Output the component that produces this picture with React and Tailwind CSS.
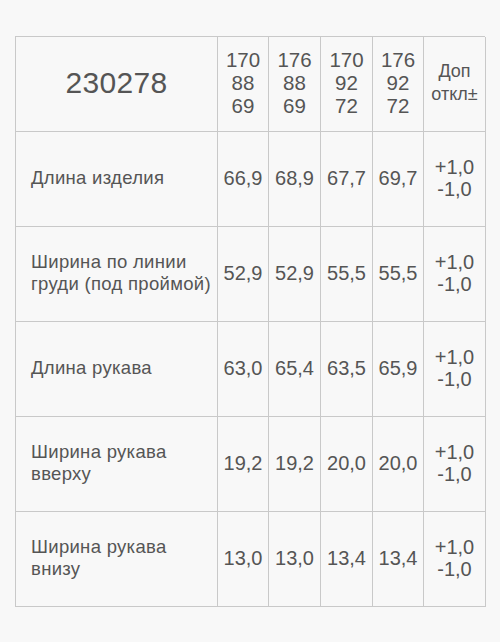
const sizes = [
  ["170", "88", "69"],
  ["176", "88", "69"],
  ["170", "92", "72"],
  ["176", "92", "72"],
];

const rows = [
  { name: ["Длина изделия"], vals: ["66,9", "68,9", "67,7", "69,7"] },
  { name: ["Ширина по линии", "груди (под проймой)"], vals: ["52,9", "52,9", "55,5", "55,5"] },
  { name: ["Длина рукава"], vals: ["63,0", "65,4", "63,5", "65,9"] },
  { name: ["Ширина рукава", "вверху"], vals: ["19,2", "19,2", "20,0", "20,0"] },
  { name: ["Ширина рукава", "внизу"], vals: ["13,0", "13,0", "13,4", "13,4"] },
];

const cell = "border-r border-b border-[#c9c9c9] flex items-center justify-center pb-[3px]";

export default function App() {
  return (
    <div
      className="w-[500px] h-[642px] bg-[#f8f8f8] pt-[36px] px-[15px] text-[#555555]"
      style={{ fontFamily: '"Liberation Sans", Arial, sans-serif' }}
    >
      <div className="grid grid-cols-[202px_51px_52px_52px_51px_62px] auto-rows-[95px] border-l border-t border-[#c9c9c9]">
        <div className={cell + " text-[30px] tracking-[0.3px]"}>230278</div>
        {sizes.map((s, i) => (
          <div key={i} className={cell + " flex-col text-[20.5px] leading-[23px]"}>
            {s.map((n, j) => (
              <span key={j}>{n}</span>
            ))}
          </div>
        ))}
        <div className={cell + " flex-col text-[18px] leading-[23px]"}>
          <span>Доп</span>
          <span>откл±</span>
        </div>

        {rows.map((r, i) => (
          <div key={i} className="contents">
            <div className={cell + " !justify-start pl-[15px]"}>
              <div className="text-[18.5px] leading-[22px] tracking-[0.3px]">
                {r.name.map((t, j) => (
                  <div key={j}>{t}</div>
                ))}
              </div>
            </div>
            {r.vals.map((v, j) => (
              <div key={j} className={cell + " text-[20px]"}>
                {v}
              </div>
            ))}
            <div className={cell + " flex-col text-[20px] leading-[22px]"}>
              <span>+1,0</span>
              <span>-1,0</span>
            </div>
          </div>
        ))}
      </div>
    </div>
  );
}
